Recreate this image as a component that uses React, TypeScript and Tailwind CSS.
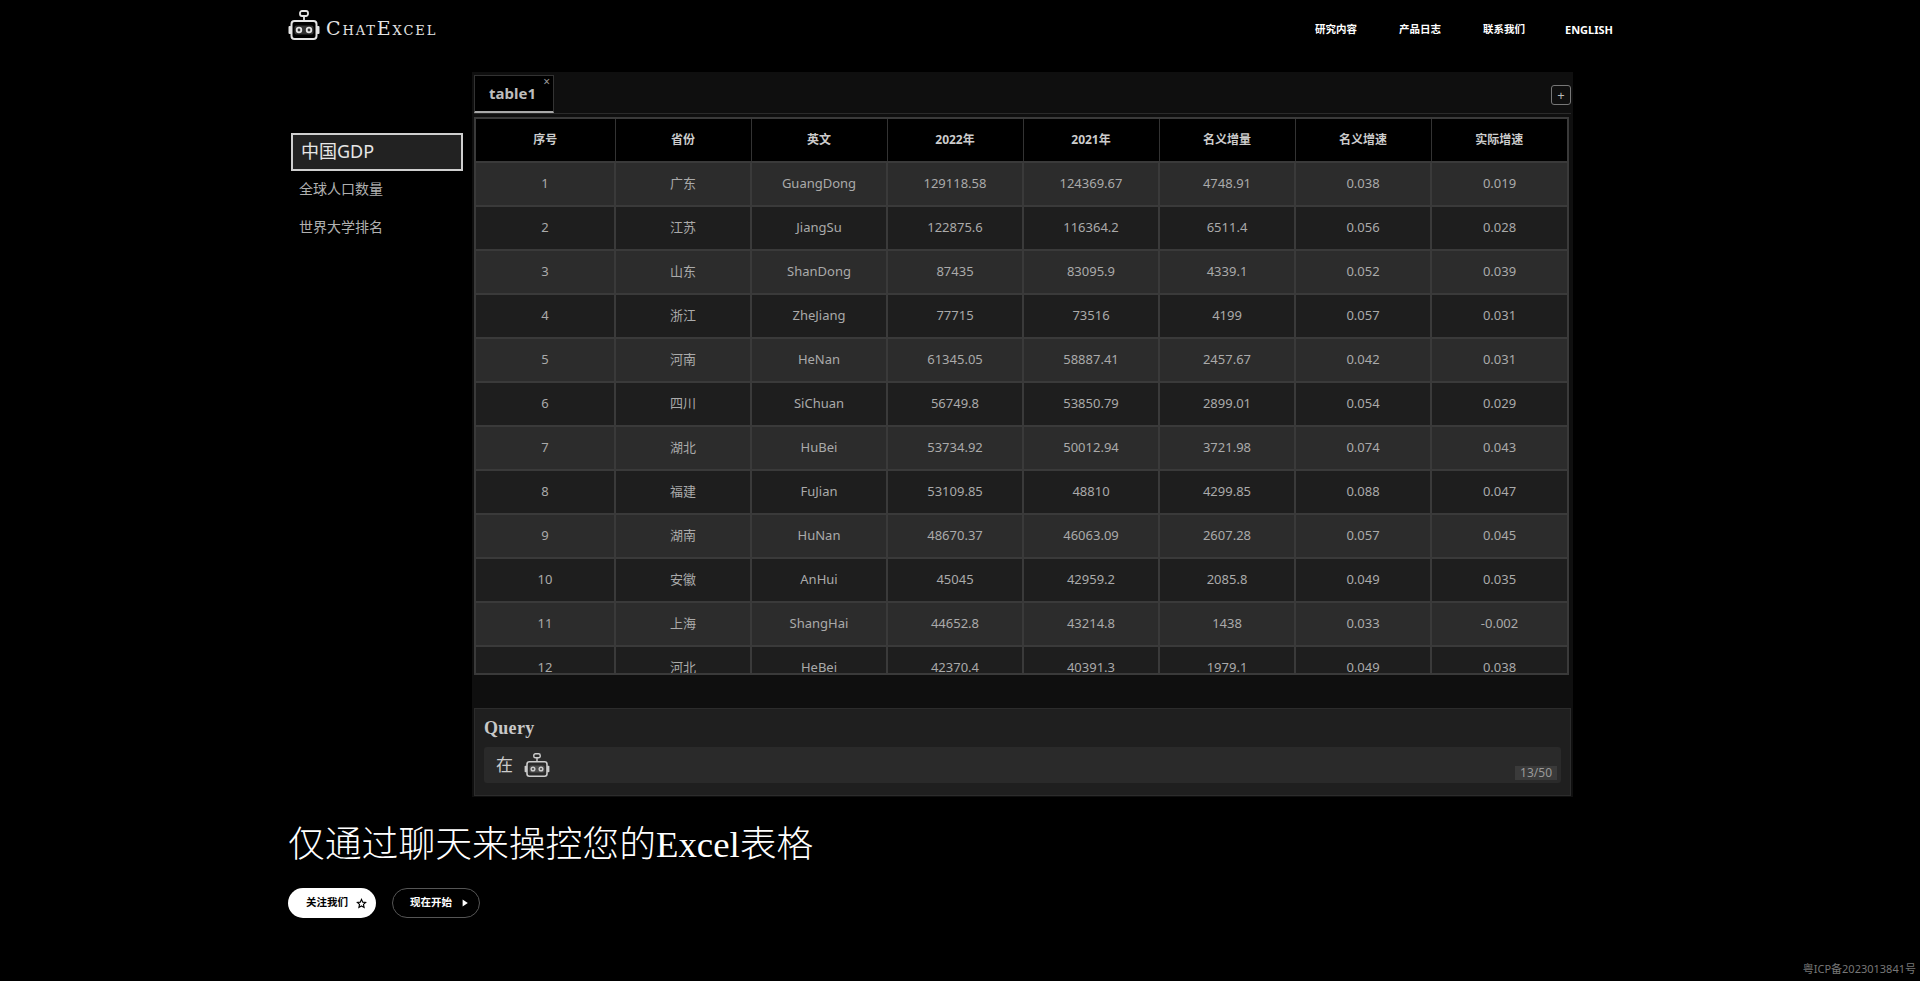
const rows: (string | number)[][] = [
  [1, "广东", "GuangDong", "129118.58", "124369.67", "4748.91", "0.038", "0.019"],
  [2, "江苏", "JiangSu", "122875.6", "116364.2", "6511.4", "0.056", "0.028"],
  [3, "山东", "ShanDong", "87435", "83095.9", "4339.1", "0.052", "0.039"],
  [4, "浙江", "ZheJiang", "77715", "73516", "4199", "0.057", "0.031"],
  [5, "河南", "HeNan", "61345.05", "58887.41", "2457.67", "0.042", "0.031"],
  [6, "四川", "SiChuan", "56749.8", "53850.79", "2899.01", "0.054", "0.029"],
  [7, "湖北", "HuBei", "53734.92", "50012.94", "3721.98", "0.074", "0.043"],
  [8, "福建", "FuJian", "53109.85", "48810", "4299.85", "0.088", "0.047"],
  [9, "湖南", "HuNan", "48670.37", "46063.09", "2607.28", "0.057", "0.045"],
  [10, "安徽", "AnHui", "45045", "42959.2", "2085.8", "0.049", "0.035"],
  [11, "上海", "ShangHai", "44652.8", "43214.8", "1438", "0.033", "-0.002"],
  [12, "河北", "HeBei", "42370.4", "40391.3", "1979.1", "0.049", "0.038"],
];
const heads = ["序号", "省份", "英文", "2022年", "2021年", "名义增量", "名义增速", "实际增速"];

function Robot({ className }: { className: string }) {
  return (
    <svg viewBox="0 0 32 30" fill="none" stroke="currentColor" className={className}>
      <rect x="12" y="1" width="8" height="5" rx="2" strokeWidth="1.800" />
      <path d="M16 6v5" strokeWidth="1.800" />
      <rect x="3.500" y="11" width="25" height="18" rx="3" strokeWidth="2" />
      <rect x="0.500" y="16" width="3" height="8" rx="1" fill="currentColor" stroke="none" />
      <rect x="28.500" y="16" width="3" height="8" rx="1" fill="currentColor" stroke="none" />
      <rect x="6.500" y="15.500" width="19" height="9" rx="2" fill="currentColor" fillOpacity="0.22" stroke="none" />
      <circle cx="11" cy="20" r="2.300" strokeWidth="1.800" />
      <circle cx="21" cy="20" r="2.300" strokeWidth="1.800" />
    </svg>
  );
}

export default function App() {
  return (
    <div className="relative flex h-[981px] w-full flex-col overflow-hidden bg-black pl-[288px] font-['Noto_Sans','Noto_Sans_CJK_SC',sans-serif] text-white">
      <header className="flex h-[50px] w-[1325px] shrink-0 items-center justify-between">
        <div className="flex items-center gap-[6px] text-[#e4e4e4]">
          <Robot className="mt-[-1px] h-[30px] w-[32px]" />
          <span className="mt-[6px] font-['DejaVu_Serif',serif] text-[19px] leading-[24px] tracking-[1.900px] [font-variant-caps:small-caps]">ChatExcel</span>
        </div>
        <nav className="mt-[10px] flex items-center gap-[42px] text-[10.5px] font-bold text-white">
          <a>研究内容</a>
          <a>产品日志</a>
          <a>联系我们</a>
          <a className="ml-[-2px] text-[11px]">ENGLISH</a>
        </nav>
      </header>

      <main className="flex shrink-0 pt-[22px]">
        <aside className="mt-[61px] w-[184px] shrink-0 pl-[3px]">
          <div className="flex h-[38px] w-[172px] items-center border-2 border-[#cfcfcf] bg-[#222222] pb-[2px] pl-[8px] text-[18px] text-[#e6e6e6]">中国GDP</div>
          <div className="mt-[6px] pl-[8px] text-[14px] leading-[24px] text-[#b0b0b0]">全球人口数量</div>
          <div className="mt-[14px] pl-[8px] text-[14px] leading-[24px] text-[#b0b0b0]">世界大学排名</div>
        </aside>

        <section className="flex h-[725px] w-[1101px] shrink-0 flex-col bg-[#0f0f0f] px-[2px] pt-[2px]">
          <div className="flex h-[40px] shrink-0 items-end justify-between border-b border-[#2a2a2a]">
            <div className="relative flex h-[38px] w-[80px] items-center border border-b-2 border-[#333333] border-b-[#a8a8a8] bg-black pl-[14px] text-[15px] font-bold text-[#bdbdbd]">
              table1
              <span className="absolute right-[3px] top-[-1px] text-[12px] font-normal leading-[14px] text-[#999999]">×</span>
            </div>
            <button className="mb-[8px] flex h-[20px] w-[20px] items-center justify-center rounded-[3px] border border-[#777777] text-[13px] leading-none text-[#b9b9b9]">+</button>
          </div>

          <div className="mt-[3px] h-[558px] w-[1095px] shrink-0 overflow-hidden border-2 border-[#3a3a3a]">
            <table className="w-full table-fixed border-collapse text-center text-[13px] text-[#aaaaaa]">
              <colgroup>
                <col className="w-[139px]" />
              </colgroup>
              <thead>
                <tr className="h-[43px] bg-black text-[12px] font-bold text-[#cccccc]">
                  {heads.map((h) => (
                    <th key={h} className="border-x border-[#333333] first:border-l-0 last:border-r-0">{h}</th>
                  ))}
                </tr>
              </thead>
              <tbody>
                {rows.map((r, i) => (
                  <tr key={i} className={`h-[44px] ${i % 2 === 0 ? "bg-[#2c2c2c]" : "bg-[#1e1e1e]"}`}>
                    {r.map((c, j) => (
                      <td key={j} className="border-2 border-[#3a3a3a] first:border-l-0 last:border-r-0">{c}</td>
                    ))}
                  </tr>
                ))}
              </tbody>
            </table>
          </div>

          <div className="mt-[33px] flex h-[88px] w-[1097px] shrink-0 flex-col border border-[#2c2c2c] bg-[#1f1f1f] px-[9px]">
            <div className="mt-[7px] font-['Liberation_Serif',serif] text-[18px] font-bold leading-[24px] tracking-[0.3px] text-[#c8c8c8]">Query</div>
            <div className="relative mt-[7px] flex h-[36px] items-center gap-[11px] rounded-[3px] bg-[#2a2a2a] pl-[12px] text-[17px] text-[#cccccc]">
              在
              <Robot className="h-[24px] w-[26px]" />
              <span className="absolute bottom-[3px] right-[4px] bg-[#3a3a3a] px-[5px] text-[12px] leading-[14px] text-[#999999]">13/50</span>
            </div>
          </div>
        </section>
      </main>

      <h1 className="mt-[25px] font-['Liberation_Serif','Noto_Sans_CJK_SC',serif] text-[36.8px] font-light leading-[46px] text-white">仅通过聊天来操控您的Excel表格</h1>

      <div className="mt-[20px] flex gap-[16px] text-[10.5px] font-bold">
        <button className="flex h-[30px] w-[88px] items-center gap-[8px] rounded-full bg-white pl-[18px] text-black">
          关注我们
          <svg viewBox="0 0 24 24" fill="none" stroke="currentColor" strokeWidth="2.500" className="h-[11px] w-[11px]">
            <path d="M12 3l2.700 6 6.300.7-4.700 4.300 1.300 6.500L12 17.200 6.400 20.500l1.300-6.500L3 9.700l6.300-.7z" />
          </svg>
        </button>
        <button className="flex h-[30px] w-[88px] items-center gap-[9px] rounded-full border border-[#555555] pl-[17px] text-white">
          现在开始
          <svg viewBox="0 0 10 10" className="h-[8px] w-[8px]" fill="currentColor">
            <path d="M2 0.500L8.500 5 2 9.500z" />
          </svg>
        </button>
      </div>

      <div className="mt-auto pb-[3px] pr-[4px] text-right text-[11px] leading-[18px] text-[#777777]">粤ICP备2023013841号</div>
    </div>
  );
}
